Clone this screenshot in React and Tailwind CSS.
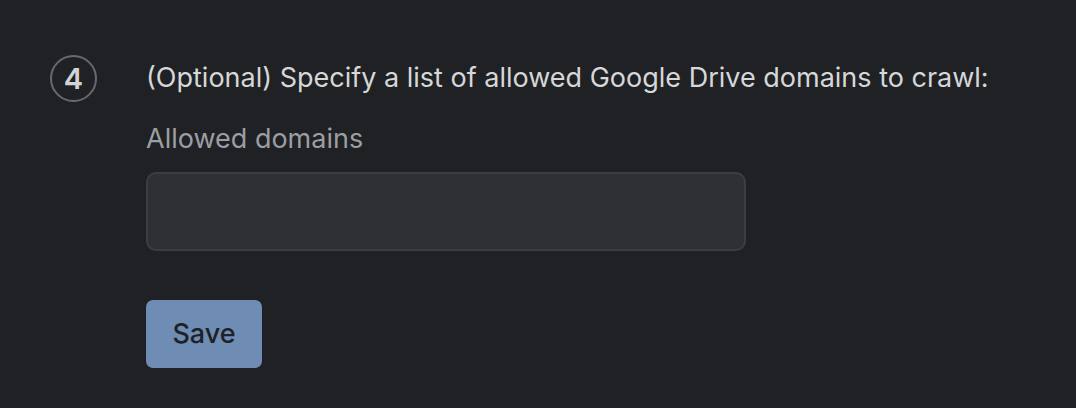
import React from 'react';

function StepBadge({ n }) {
  return (
    <div className="w-[47px] h-[47px] rounded-full border-2 border-[#68696d] flex items-center justify-center text-[29px] leading-none font-semibold text-[#d2d3d5] shrink-0">
      {n}
    </div>
  );
}

export default function App() {
  return (
    <div className="min-h-screen w-full bg-[#202124] text-[#dadce0] font-['Inter','Liberation_Sans',Arial,sans-serif]">
      <div className="flex pt-[55px] pl-[50px]">
        <StepBadge n={4} />
        <div className="ml-[49px] pt-[6px]">
          <p className="text-[27px] leading-[34px] text-[#d6d7d9]">
            (Optional) Specify a list of allowed Google Drive domains to crawl:
          </p>
          <label className="block mt-[27px] text-[27px] leading-[34px] text-[#9b9ea3]">Allowed domains</label>
          <input
            type="text"
            className="block mt-[16px] w-[600px] h-[79px] rounded-[10px] bg-[#2f3034] border-2 border-[#3c3d41] outline-none px-4 text-[24px] text-[#dadce0]"
          />
          <button className="mt-[49px] w-[116px] h-[68px] rounded-[7px] bg-[#6e8cb4] text-[27px] font-medium text-[#1e2127]">
            Save
          </button>
        </div>
      </div>
    </div>
  );
}
